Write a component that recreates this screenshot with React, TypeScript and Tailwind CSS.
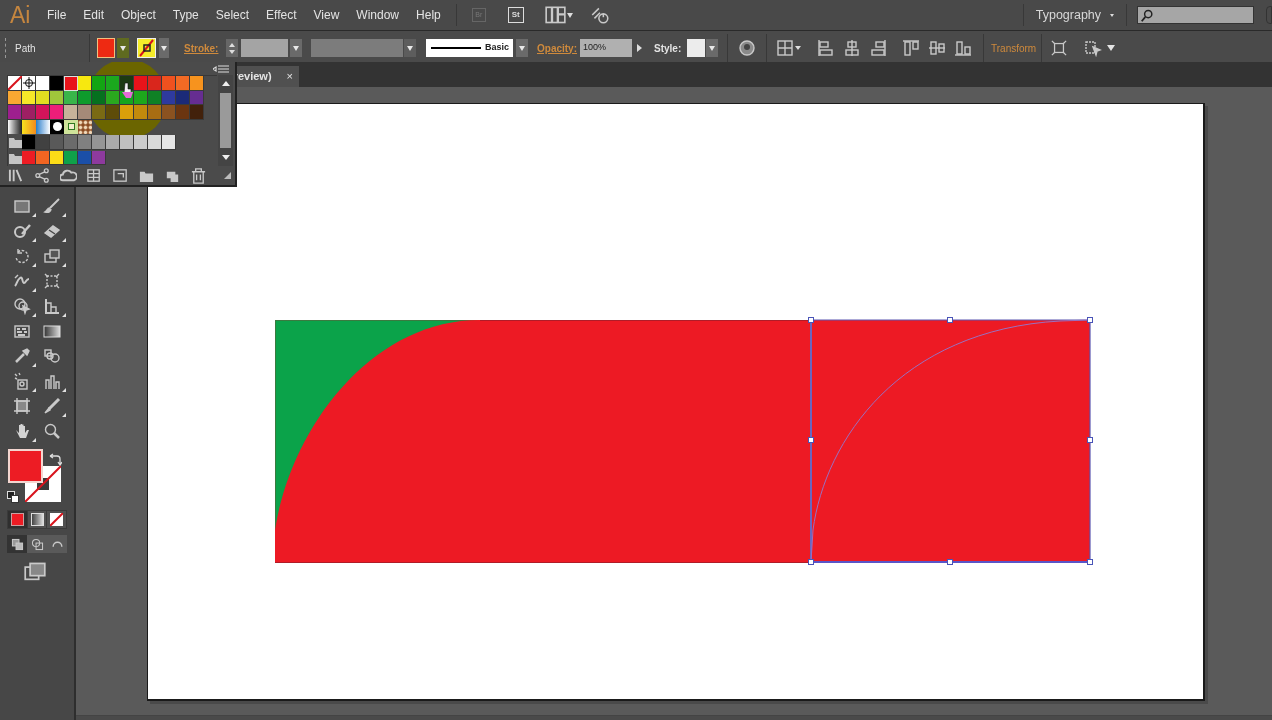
import type { ReactNode } from "react";

const menus = ["File", "Edit", "Object", "Type", "Select", "Effect", "View", "Window", "Help"];

const row1 = ["#f7e80f", "#13a513", "#1ba81e", "#1c3a12", "#e8131a", "#d9261c", "#f0511f", "#f26a24", "#f7931e"];
const row2 = ["#f9a832", "#f6e828", "#e3df20", "#9fc63b", "#39b54a", "#0e9b2c", "#06701f", "#2aa81e", "#15a51e", "#1da81c", "#0f8125", "#2e3a9e", "#1b2a78", "#662d91"];
const row3 = ["#9e1f8e", "#9e1f63", "#d4145a", "#ed1e79", "#c7b299", "#a58a78", "#7a6a14", "#5e4c08", "#d99f0a", "#c28a0c", "#a86d12", "#8b5220", "#6b3510", "#42210b"];
const row5 = ["#000000", "#414141", "#595959", "#6b6b6b", "#808080", "#959595", "#aaaaaa", "#bfbfbf", "#cccccc", "#d9d9d9", "#e6e6e6"];
const row6 = ["#ed1c24", "#f26522", "#fcdc17", "#0fa14a", "#1b4fa8", "#8e3a9e"];

function Ico({ children, size = 18 }: { children: ReactNode; size?: number }) {
  return (
    <svg width={size} height={size} viewBox="0 0 18 18" fill="none" stroke="#c9c9c9" strokeWidth="1.4" className="shrink-0">
      {children}
    </svg>
  );
}

function Drop({ className = "" }: { className?: string }) {
  return (
    <div className={`flex h-[18px] w-[12px] items-center justify-center bg-[#6a6a6a] ${className}`}>
      <div className="h-0 w-0 border-x-[3.5px] border-t-[5px] border-x-transparent border-t-[#e8e8e8]" />
    </div>
  );
}

function Sep({ className = "" }: { className?: string }) {
  return <div className={`h-full w-px bg-[#383838] ${className}`} />;
}

function Swatch({ color }: { color: string }) {
  return <div className="h-[14.5px] w-[14px] border-r border-b border-[#3a3a3a]" style={{ backgroundColor: color }} />;
}

function Folder() {
  return (
    <div className="flex h-[14.5px] w-[14px] items-center justify-center">
      <svg width="13" height="12" viewBox="0 0 13 12" fill="#c4c4c4">
        <path d="M0 2h5l1 2h7v8H0z" />
      </svg>
    </div>
  );
}

function Tool({ children, corner = true }: { children: ReactNode; corner?: boolean }) {
  return (
    <div className="relative flex h-[25px] w-[30px] items-center justify-center">
      {children}
      {corner && <div className="absolute right-[1px] bottom-[1px] h-0 w-0 border-b-[4px] border-l-[4px] border-b-[#e0e0e0] border-l-transparent" />}
    </div>
  );
}

function Handle({ x, y }: { x: number; y: number }) {
  return <rect x={x - 2.5} y={y - 2.5} width="5" height="5" fill="#fff" stroke="#4a55b8" strokeWidth="1" />;
}

export default function App() {
  return (
    <div className="relative h-[720px] w-[1272px] overflow-hidden bg-[#5a5a5a] font-['Liberation_Sans',sans-serif] blur-[0.4px]">
      {/* app bar */}
      <div className="flex h-[31px] items-center border-b border-[#2a2a2a] bg-[#494949] text-[12px] text-[#e4e4e4]">
        <span className="ml-[10px] w-[37px] text-[23px] leading-none text-[#c5863f]">Ai</span>
        <div className="flex gap-[17px]">
          {menus.map((m) => (
            <span key={m}>{m}</span>
          ))}
        </div>
        <Sep className="ml-[15px] !h-[22px]" />
        <div className="ml-[15px] flex h-[14px] w-[14px] items-center justify-center border border-[#666] text-[7px] text-[#777]">Br</div>
        <div className="ml-[22px] flex h-[16px] w-[16px] items-center justify-center border border-[#ddd] text-[8px] font-bold text-[#ddd]">St</div>
        <div className="ml-[21px]">
          <Ico size={21}>
            <rect x="1" y="2" width="16" height="13" />
            <path d="M6 2v13M11 2v13M11 8h6" strokeWidth="2" />
          </Ico>
        </div>
        <div className="ml-[1px] h-0 w-0 border-x-[3.5px] border-t-[5px] border-x-transparent border-t-[#ddd]" />
        <div className="ml-[17px]">
          <Ico size={20}>
            <path d="M2 9l6-6M4 12l5-5" />
            <circle cx="12" cy="12" r="4" />
            <path d="M12 8v3" />
          </Ico>
        </div>
        <Sep className="ml-[413px] !h-[22px]" />
        <span className="ml-[12px] text-[12.5px] text-[#d8d8d8]">Typography</span>
        <div className="ml-[9px] h-0 w-0 border-x-[2.5px] border-t-[3px] border-x-transparent border-t-[#ddd]" />
        <Sep className="ml-[12px] !h-[22px]" />
        <div className="ml-[10px] flex h-[18px] w-[117px] items-center border border-[#333] bg-[#a6a6a6] pl-[3px]">
          <Ico size={13}>
            <circle cx="10" cy="7" r="5" stroke="#222" strokeWidth="2" />
            <path d="M6 11l-5 6" stroke="#222" strokeWidth="2.5" />
          </Ico>
        </div>
        <div className="ml-[12px] h-[18px] flex-1 rounded-l-sm border border-[#333]" />
      </div>

      {/* control bar */}
      <div className="flex h-[31px] items-center bg-[#4a4a4a] pt-[3px] text-[10px] text-[#e4e4e4]">
        <div className="ml-[5px] h-[20px] w-[2px] border-l border-dashed border-[#999]" />
        <span className="ml-[8px] w-[20px]">Path</span>
        <Sep className="ml-[54px]" />
        <div className="ml-[7px] h-[20px] w-[18px] border border-[#f0c080] bg-[#ee2a12]" />
        <Drop className="ml-[2px] !h-[20px] !bg-[#5f6a20]" />
        <div className="relative ml-[8px] h-[20px] w-[19px] overflow-hidden border border-[#eee] bg-[#f5ec2a]">
          <svg width="17" height="18" viewBox="0 0 17 18">
            <path d="M2 17L15 1" stroke="#d8131c" strokeWidth="2" />
            <rect x="6" y="6" width="6" height="6" fill="none" stroke="#222" strokeWidth="1.5" />
          </svg>
        </div>
        <Drop className="ml-[3px] !h-[20px] !w-[10px]" />
        <span className="ml-[15px] w-[32px] font-bold text-[#cf8a3c] underline">Stroke:</span>
        <div className="ml-[10px] flex h-[18px] w-[12px] flex-col items-center justify-center gap-[3px] bg-[#666]">
          <div className="h-0 w-0 border-x-[3px] border-b-[4px] border-x-transparent border-b-[#ddd]" />
          <div className="h-0 w-0 border-x-[3px] border-t-[4px] border-x-transparent border-t-[#ddd]" />
        </div>
        <div className="ml-[3px] h-[18px] w-[47px] bg-[#a4a4a4]" />
        <Drop className="ml-[2px]" />
        <div className="ml-[9px] h-[18px] w-[92px] bg-[#7c7c7c]" />
        <Drop className="ml-[1px] !bg-[#5d5d5d]" />
        <div className="ml-[10px] flex h-[18px] w-[87px] items-center bg-white pl-[5px] text-[9px] font-bold text-[#222]">
          <div className="h-[2px] w-[50px] bg-black" />
          <span className="ml-[4px]">Basic</span>
        </div>
        <Drop className="ml-[3px]" />
        <span className="ml-[9px] w-[38px] font-bold text-[#cf8a3c] underline">Opacity:</span>
        <div className="ml-[5px] flex h-[18px] w-[52px] items-center bg-[#b0b0b0] pl-[3px] text-[9px] text-[#222]">100%</div>
        <div className="ml-[5px] h-0 w-0 border-y-[4px] border-l-[5px] border-y-transparent border-l-[#ddd]" />
        <span className="ml-[12px] w-[28px] font-bold">Style:</span>
        <div className="ml-[5px] h-[18px] w-[18px] bg-[#ececec]" />
        <Drop className="ml-[1px]" />
        <Sep className="ml-[9px]" />
        <div className="ml-[10px]">
          <Ico>
            <circle cx="9" cy="9" r="7" fill="#8a8a8a" />
            <circle cx="9" cy="8" r="3" fill="#444" stroke="none" />
          </Ico>
        </div>
        <Sep className="ml-[10px]" />
        <div className="ml-[9px]">
          <Ico>
            <rect x="2" y="2" width="14" height="14" />
            <path d="M9 2v14M2 9h14" />
          </Ico>
        </div>
        <div className="ml-[1px] h-0 w-0 border-x-[3px] border-t-[4px] border-x-transparent border-t-[#ddd]" />
        <div className="ml-[15px] flex gap-[9px]">
          <Ico><path d="M3 1v16" /><rect x="4" y="3" width="8" height="5" /><rect x="4" y="11" width="12" height="5" /></Ico>
          <Ico><path d="M9 1v16" /><rect x="5" y="3" width="8" height="5" /><rect x="3" y="11" width="12" height="5" /></Ico>
          <Ico><path d="M15 1v16" /><rect x="6" y="3" width="8" height="5" /><rect x="2" y="11" width="12" height="5" /></Ico>
        </div>
        <div className="ml-[14px] flex gap-[8px]">
          <Ico><path d="M1 2h16" /><rect x="3" y="3" width="5" height="13" /><rect x="11" y="3" width="5" height="7" /></Ico>
          <Ico><path d="M1 9h16" /><rect x="3" y="3" width="5" height="12" /><rect x="11" y="5" width="5" height="8" /></Ico>
          <Ico><path d="M1 16h16" /><rect x="3" y="3" width="5" height="12" /><rect x="11" y="8" width="5" height="7" /></Ico>
        </div>
        <Sep className="ml-[11px]" />
        <span className="ml-[7px] w-[44px] text-[#cf8a3c]">Transform</span>
        <Sep className="ml-[6px]" />
        <div className="ml-[9px]">
          <Ico size={16}>
            <rect x="4" y="4" width="10" height="10" />
            <path d="M1 1l3 3M17 1l-3 3M1 17l3-3M17 17l-3-3" />
          </Ico>
        </div>
        <div className="ml-[17px]">
          <Ico>
            <rect x="2" y="3" width="9" height="11" strokeDasharray="2 1" />
            <path d="M9 8l7 3-3 1-1 4z" fill="#c9c9c9" />
          </Ico>
        </div>
        <div className="ml-[5px] h-0 w-0 border-x-[4px] border-t-[6px] border-x-transparent border-t-[#e4e4e4]" />
      </div>

      <div className="flex h-[658px]">
        {/* tools */}
        <div className="w-[76px] shrink-0 border-r-[2px] border-[#2e2e2e] bg-[#474747] pt-[131px]">
          <div className="grid w-[60px] translate-x-[7px] grid-cols-2">
            <Tool><Ico><rect x="2" y="4" width="14" height="11" fill="#777" /></Ico></Tool>
            <Tool><Ico><path d="M16 2L7 11" strokeWidth="2" /><path d="M7 11c-3 0-3 3-5 4 3 1 6 0 6-3" fill="#c9c9c9" /></Ico></Tool>
            <Tool><Ico><circle cx="7" cy="10" r="5" strokeWidth="2" /><path d="M9 12l8-9" strokeWidth="2.5" /></Ico></Tool>
            <Tool><Ico><path d="M2 11l8-7 6 4-8 7z" fill="#c9c9c9" /><path d="M6 8l6 4" stroke="#444" /></Ico></Tool>
            <Tool><Ico><path d="M5 5a6 6 0 1 1-2 5" strokeDasharray="2.5 1.5" /><path d="M5 2v4h4" /></Ico></Tool>
            <Tool><Ico><rect x="2" y="7" width="11" height="8" /><rect x="7" y="3" width="9" height="8" fill="#555" /></Ico></Tool>
            <Tool><Ico><path d="M2 14c2-2 2-6 5-8s2 5 4 5 2-4 5-4" strokeWidth="2" /><path d="M2 6l3-3" /></Ico></Tool>
            <Tool corner={false}><Ico><rect x="4" y="4" width="10" height="10" strokeDasharray="2 1.5" /><path d="M2 2l3 3M16 16l-3-3M2 16l3-3M16 2l-3 3" /></Ico></Tool>
            <Tool><Ico><circle cx="7" cy="7" r="5" /><circle cx="10" cy="9" r="4" /><path d="M10 9l6 3-3 1-1 3z" fill="#c9c9c9" /></Ico></Tool>
            <Tool><Ico><path d="M3 2v14h13" strokeWidth="2" /><path d="M3 6h5v10M8 10h5v6" /></Ico></Tool>
            <Tool corner={false}><Ico><rect x="2" y="4" width="14" height="11" /><path d="M4 7h3M9 7h4M4 10h5M11 10h3M5 13h7" strokeWidth="2" /></Ico></Tool>
            <Tool corner={false}><svg width="18" height="18" viewBox="0 0 18 18"><defs><linearGradient id="gt"><stop offset="0" stopColor="#333" /><stop offset="1" stopColor="#ddd" /></linearGradient></defs><rect x="1" y="4" width="16" height="11" fill="url(#gt)" stroke="#ddd" /></svg></Tool>
            <Tool><Ico><path d="M3 15l8-8" strokeWidth="2.5" /><path d="M10 4l4 4 2-4-2-2z" fill="#c9c9c9" /></Ico></Tool>
            <Tool corner={false}><Ico><rect x="2" y="3" width="6" height="6" /><circle cx="7" cy="9" r="3" /><circle cx="12" cy="11" r="4" /></Ico></Tool>
            <Tool><Ico><rect x="5" y="8" width="9" height="9" /><circle cx="9" cy="12" r="2" /><path d="M2 2l2 2M6 1l1 2M2 6l2 1" /></Ico></Tool>
            <Tool><Ico><path d="M3 17V8h3v9M8 17V4h3v13M13 17v-7h3v7" /></Ico></Tool>
            <Tool corner={false}><Ico><rect x="4" y="4" width="10" height="10" fill="#888" /><path d="M4 1v16M14 1v16M1 4h16M1 14h16" /></Ico></Tool>
            <Tool><Ico><path d="M16 2L6 12" strokeWidth="3" /><path d="M6 11l-4 5 5-3z" fill="#c9c9c9" /></Ico></Tool>
            <Tool><svg width="18" height="18" viewBox="0 0 18 18" fill="#d4d4d4"><path d="M3 8l3 3V3h1.5v5V2H9v6V2.5h1.5V8 4H12v7l2-3h2l-3 8H7z" /></svg></Tool>
            <Tool corner={false}><Ico><circle cx="7.5" cy="7.5" r="5" /><path d="M11 11l5 5" strokeWidth="2.5" /></Ico></Tool>
          </div>

          {/* fill and stroke */}
          <div className="relative mt-[6px] h-[56px] w-[74px]">
            <div className="absolute top-[17px] left-[25px] h-[36px] w-[36px] bg-white p-[12px]">
              <div className="h-full w-full bg-[#3a3a3a]" />
            </div>
            <svg className="absolute top-[17px] left-[25px]" width="36" height="36"><path d="M0 36L36 0" stroke="#d8131c" strokeWidth="2" /></svg>
            <div className="absolute top-0 left-[8px] h-[34px] w-[35px] border-2 border-[#f4d6d0] bg-[#ed1c24]" />
            <svg className="absolute top-[4px] left-[49px]" width="13" height="13" viewBox="0 0 13 13" fill="none" stroke="#ddd" strokeWidth="1.3"><path d="M2 3h6a3 3 0 0 1 3 3v5M1 3l3-2M1 3l3 2M9 9l2 3 2-3" /></svg>
            <div className="absolute top-[42px] left-[7px] h-[8px] w-[8px] border border-[#ddd] bg-[#222]" />
            <div className="absolute top-[46px] left-[11px] h-[8px] w-[8px] border border-[#333] bg-white" />
          </div>

          <div className="ml-[7px] mt-[5px] flex h-[19px] w-[60px] gap-[1px] bg-[#3a3a3a] p-[1px]">
            <div className="flex flex-1 items-center justify-center bg-[#2f2f2f]"><div className="h-[13px] w-[13px] border border-[#c8a0a0] bg-[#ed1c24]" /></div>
            <div className="flex flex-1 items-center justify-center bg-[#505050]"><div className="h-[13px] w-[13px] border border-[#ddd] bg-gradient-to-r from-[#444] to-[#ddd]" /></div>
            <div className="flex flex-1 items-center justify-center bg-[#505050]">
              <svg width="13" height="13"><rect width="13" height="13" fill="#fff" /><path d="M0 13L13 0" stroke="#d8131c" strokeWidth="2" /></svg>
            </div>
          </div>

          <div className="ml-[7px] mt-[6px] flex h-[18px] w-[60px]">
            <div className="flex w-[20px] items-center justify-center bg-[#333]"><Ico size={13}><rect x="2" y="2" width="9" height="9" fill="#999" /><rect x="7" y="7" width="9" height="9" fill="#bbb" /></Ico></div>
            <div className="flex w-[20px] items-center justify-center bg-[#5a5a5a]"><Ico size={13}><circle cx="7" cy="7" r="5" /><rect x="7" y="7" width="9" height="9" /></Ico></div>
            <div className="flex w-[20px] items-center justify-center bg-[#5a5a5a]"><Ico size={13}><path d="M3 12a6 6 0 1 1 12 0" strokeWidth="2" /></Ico></div>
          </div>

          <div className="mt-[8px] ml-[24px]">
            <Ico size={22}>
              <rect x="1" y="5" width="11" height="10" fill="#474747" />
              <rect x="5" y="2" width="12" height="10" fill="#888" />
            </Ico>
          </div>
        </div>

        {/* document area */}
        <div className="flex-1">
          <div className="h-[25px] bg-[#333333] pt-[4px]">
            <div className="flex h-[21px] w-[223px] items-center justify-end bg-[#505050] pr-[6px] text-[11px] font-bold text-[#e4e4e4]">
              <span>(Preview)</span>
              <span className="ml-[15px] font-normal">×</span>
            </div>
          </div>
          <div className="pt-[16px] pl-[71px]">
            <div className="h-[598px] w-[1058px] border-t border-r-2 border-b-2 border-l border-[#1a1a1a] bg-white shadow-[3px_3px_0_#4a4a4a]">
              <svg width="1056" height="596" viewBox="148 104 1056 596">
                <rect x="275.5" y="320.5" width="210" height="242" fill="#0ba34a" stroke="#3a7a40" strokeWidth="1" />
                <path d="M275 563V530C290 430 370 320 480 320H811V563Z" fill="#ed1a24" />
                <path d="M275 562.5H811M480 320.5H811" stroke="#b01c28" strokeWidth="1" fill="none" />
                <rect x="811" y="320" width="279" height="242" fill="#ed1a24" />
                <path d="M811 320H1090V562H811Z" fill="none" stroke="#5a55b0" strokeWidth="1.2" />
                <path d="M811 320V562" stroke="#6a66c0" strokeWidth="2" />
                <path d="M811 562H1090" stroke="#5a55c8" strokeWidth="2" />
                <path d="M811 562L813 530C825 440 900 330 1060 321L1090 320" fill="none" stroke="#9a70c0" strokeWidth="1" />
                <Handle x={811} y={320} />
                <Handle x={950} y={320} />
                <Handle x={1090} y={320} />
                <Handle x={811} y={440} />
                <Handle x={1090} y={440} />
                <Handle x={811} y={562} />
                <Handle x={950} y={562} />
                <Handle x={1090} y={562} />
              </svg>
            </div>
          </div>
          <div className="mt-[14px] h-[5px] border-t border-[#444] bg-[#4a4a4a]" />
        </div>
      </div>

      {/* swatches flyout */}
      <div className="absolute top-[62px] left-0 flex h-[125px] w-[237px] flex-col overflow-hidden border-r-[2px] border-b-[2px] border-[#222] bg-[#4b4b4b]">
        {/* cursor highlight from the screen recorder, sits under the swatches */}
        <div className="absolute top-[-3px] left-[87px] h-[80px] w-[80px] rounded-full bg-[#6b6500]" />
        <div className="relative flex h-[13px] items-center justify-end pr-[6px]">
          <svg width="16" height="10" viewBox="0 0 16 10" stroke="#ddd" strokeWidth="1.2"><path d="M0 5l3-2v4zM5 2h11M5 5h11M5 8h11" /></svg>
        </div>
        <div className="relative flex h-[91px] pl-[7px]">
          <div className="h-[91px] w-[210px] border-t border-l border-[#383838]">
            <div className="flex">
              <div className="h-[14.5px] w-[14px] border-r border-b border-[#3a3a3a] bg-white">
                <svg width="14" height="14"><path d="M0 14L14 0" stroke="#d8131c" strokeWidth="2" /></svg>
              </div>
              <div className="flex h-[14.5px] w-[14px] items-center justify-center border-r border-b border-[#3a3a3a] bg-white">
                <svg width="12" height="12" fill="none" stroke="#111"><circle cx="6" cy="6" r="3.5" /><path d="M6 0v12M0 6h12" /></svg>
              </div>
              <Swatch color="#ffffff" />
              <Swatch color="#000000" />
              <div className="h-[14.5px] w-[14px] border border-[#ddd] bg-[#e8131a]" />
              {row1.map((c, i) => (
                <Swatch key={i} color={c} />
              ))}
            </div>
            <div className="flex">
              {row2.map((c, i) => (
                <Swatch key={i} color={c} />
              ))}
            </div>
            <div className="flex">
              {row3.map((c, i) => (
                <Swatch key={i} color={c} />
              ))}
            </div>
            <div className="flex">
              <div className="h-[14.5px] w-[14px] bg-gradient-to-r from-white to-[#222]" />
              <div className="h-[14.5px] w-[14px] bg-gradient-to-r from-[#f7e21e] to-[#f08a1e]" />
              <div className="h-[14.5px] w-[14px] bg-gradient-to-r from-[#1e7ec8] to-white" />
              <div className="flex h-[14.5px] w-[14px] items-center justify-center bg-black"><div className="h-[9px] w-[9px] rounded-full bg-white" /></div>
              <div className="flex h-[14.5px] w-[14px] items-center justify-center bg-[#cfe39a]"><div className="h-[7px] w-[7px] border border-[#2f7a20] bg-[#f2eecb]" /></div>
              <div className="h-[14.5px] w-[14px] bg-[radial-gradient(circle,#f0d8b8_30%,#8a4a20_70%)] bg-[length:5px_5px]" />
            </div>
            <div className="flex pt-[1px]">
              <Folder />
              {row5.map((c, i) => (
                <Swatch key={i} color={c} />
              ))}
            </div>
            <div className="flex pt-[1px]">
              <Folder />
              {row6.map((c, i) => (
                <Swatch key={i} color={c} />
              ))}
            </div>
          </div>
          <div className="ml-[1px] flex h-[91px] w-[15px] flex-col items-center justify-between bg-[#444] py-[6px]">
            <div className="h-0 w-0 border-x-[4px] border-b-[5px] border-x-transparent border-b-[#eee]" />
            <div className="h-[55px] w-[11px] bg-[#9a9a9a]" />
            <div className="h-0 w-0 border-x-[4px] border-t-[5px] border-x-transparent border-t-[#eee]" />
          </div>
        </div>
        <div className="relative flex h-[19px] items-center pl-[8px]">
          <div className="flex gap-[9px]">
            <Ico size={17}><path d="M2 3v12M6 3v12M9 3l5 12" strokeWidth="2" /></Ico>
            <Ico size={17}><circle cx="4" cy="9" r="2" /><circle cx="13" cy="4" r="2" /><circle cx="13" cy="14" r="2" /><path d="M5 8l7-3M5 10l7 3" /></Ico>
            <Ico size={17}><path d="M3 14a3 3 0 0 1 0-6 5 5 0 0 1 9-2 4 4 0 0 1 3 8z" strokeWidth="2" /></Ico>
            <Ico size={17}><rect x="2" y="3" width="12" height="12" /><path d="M2 7h12M2 11h12M8 3v12" /></Ico>
            <Ico size={17}><rect x="2" y="3" width="13" height="12" /><path d="M6 7h6v4" /></Ico>
            <svg width="17" height="17" viewBox="0 0 18 18" fill="#c9c9c9" className="shrink-0"><path d="M2 5h5l1 2h8v9H2z" /></svg>
            <svg width="17" height="17" viewBox="0 0 18 18" fill="#c9c9c9" className="shrink-0"><path d="M3 5h9v3h3v8H7v-4H3z" /></svg>
            <Ico size={17}><path d="M2 5h14M6 5V2h6v3M4 5v12h10V5M7 8v6M11 8v6" /></Ico>
          </div>
          <div className="ml-[17px] h-0 w-0 border-b-[7px] border-l-[7px] border-b-[#bbb] border-l-transparent" />
        </div>
      </div>

      {/* mouse pointer */}
      <svg className="absolute top-[82px] left-[121px]" width="14" height="18" viewBox="0 0 14 18">
        <path d="M4 1h3v6h3v4H3z" fill="#f2f2f2" stroke="#111" strokeWidth="0.6" />
        <path d="M1 10h11l-2 6H5z" fill="#e46bd6" />
      </svg>
    </div>
  );
}
